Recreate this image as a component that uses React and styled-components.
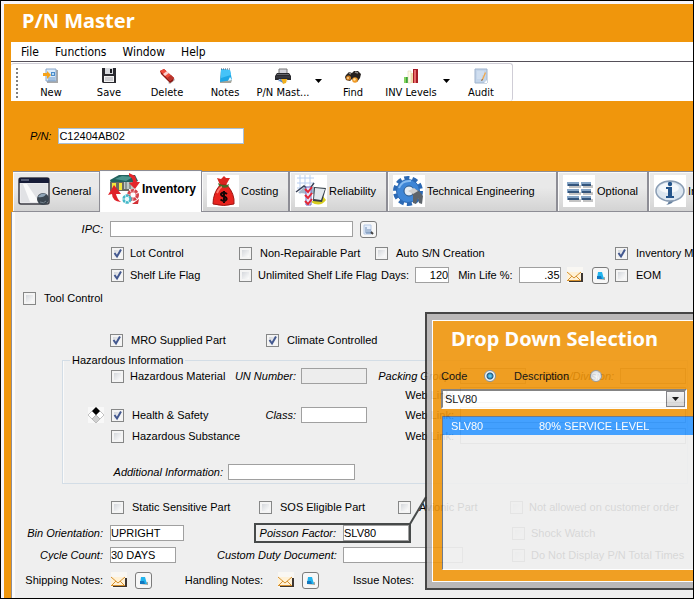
import React, { useState } from "react";
import styled, { createGlobalStyle, css } from "styled-components";

const ui = `"Liberation Sans", Arial, sans-serif`;
const chrome = `"DejaVu Sans Condensed", "Noto Sans", sans-serif`;
const heading = `"Noto Sans", "Open Sans", sans-serif`;
const ORANGE = "#f0960c";

const Global = createGlobalStyle`
  *, *::before, *::after { box-sizing: border-box; }
  body { margin: 0; background: #000; }
  button, input, select { font: inherit; color: inherit; margin: 0; }
`;

const Frame = styled.main`
  position: relative;
  display: flex;
  flex-direction: column;
  min-height: 100vh;
  overflow: hidden;
  border: 1px solid #000;
  background: ${ORANGE};
  box-shadow: inset 3px 3px 0 #f6f4fa;
  padding: 3px 0 0 3px;
  font: 11px/14px ${ui};
  color: #000;
  white-space: nowrap;
`;

const Title = styled.h1`
  margin: 0;
  padding: 2px 18px 0;
  height: 38px;
  font: 700 20px/30px ${heading};
  color: #fff;
`;

const MenuBar = styled.nav`
  display: flex;
  gap: 16px;
  margin-left: 7px;
  padding: 0 10px;
  height: 20px;
  background: #fff;
  border-bottom: 1px solid #555059;
  font: 12px/18px ${chrome};
`;

const MenuItem = styled.button`
  border: 0;
  padding: 0;
  background: none;
`;

const ToolBand = styled.div`
  display: flex;
  margin-left: 7px;
  padding-top: 1px;
  background: #fff;
`;

const ToolBar = styled.div`
  display: flex;
  height: 38px;
  padding: 0 2px 0 11px;
  border: 1px solid #cfcdd6;
  border-left: 0;
  border-bottom: 0;
  border-radius: 3px;
  font: 11px/14px ${chrome};
`;

const Grip = styled.span`
  width: 2px;
  margin: 4px 0 1px -6px;
  background: repeating-linear-gradient(#808080 0 2px, transparent 2px 4px);
`;

const Tool = styled.button`
  display: flex;
  flex-direction: column;
  align-items: center;
  gap: 2px;
  width: 58px;
  padding: 4px 0 0;
  border: 0;
  background: none;
`;

const Tools = styled.div`
  display: flex;
  margin-left: 4px;
`;

const ToolMenu = styled.button`
  display: flex;
  justify-content: center;
  width: 12px;
  padding: 15px 0 0;
  border: 0;
  background: none;
`;

const PartRow = styled.div`
  display: flex;
  align-items: center;
  gap: 7px;
  padding-left: 26px;
  height: 69px;
`;

const Name = styled.label`
  font-style: ${(p) => (p.$upright ? "normal" : "italic")};
  text-align: ${(p) => (p.$start ? "left" : "right")};
`;

const Field = styled.input`
  width: ${(p) => p.$w}px;
  height: 16px;
  padding: 0;
  border: 1px solid ${(p) => (p.$soft ? "#a9bfd6" : "#a0a0a0")};
  border-radius: 0;
  background: #fff;
  text-align: ${(p) => (p.$right ? "right" : "left")};
  outline: 0;
  &:disabled { background: #ededed; }
`;

const Wide = styled(Field)`
  width: auto;
  flex: 1;
  min-width: 0;
`;

const Tabs = styled.div`
  display: flex;
  align-items: flex-end;
  margin-left: 9px;
  height: 42px;
`;

const Tab = styled.button`
  flex: none;
  display: flex;
  align-items: center;
  gap: 2px;
  width: ${(p) => p.$w}px;
  height: 41px;
  padding: 0 0 2px 5px;
  border: 1px solid #8d8d95;
  border-width: 1px 2px 1px 0;
  background: linear-gradient(#e9e9e9 0 40%, #d3d3d3);
  box-shadow: inset 1px 1px 0 #fafafa;
  ${(p) =>
    p.$active &&
    css`
      position: relative;
      height: 42px;
      margin-left: -1px;
      padding: 0 0 5px 8px;
      border-width: 1px 1px 0 0;
      background: #fff;
      font-weight: 700;
      font-size: 12px;
    `}
`;

const Panel = styled.section`
  flex: 1;
  margin-left: 7px;
  padding: 4px 0 4px 2px;
  border-left: 1px solid #8d8d95;
  background: #efefef;
  box-shadow: inset 3px 0 0 #fbfbfb;
`;

const Row = styled.div`
  display: grid;
  grid-template-columns: ${(p) => p.$cols};
  align-items: center;
  height: ${(p) => p.$h || 22}px;
  margin-top: ${(p) => p.$top || 0}px;
`;

const Cell = styled.div`
  display: flex;
  align-items: center;
  justify-content: ${(p) => (p.$end ? "flex-end" : "flex-start")};
  gap: ${(p) => p.$gap || 0}px;
  padding-left: ${(p) => p.$pad || 0}px;
  padding-right: ${(p) => p.$padEnd || 0}px;
  min-width: 0;
`;

const CheckLabel = styled.label`
  display: flex;
  align-items: center;
  gap: ${(p) => p.$gap || 8}px;
`;

const CheckBox = styled.span`
  display: grid;
  flex: none;
  > * { grid-area: 1 / 1; }
  > svg { pointer-events: none; visibility: hidden; }
  > input:checked + svg { visibility: visible; }
`;

const CheckInput = styled.input`
  appearance: none;
  width: 13px;
  height: 13px;
  border: 1px solid #868787;
  background: linear-gradient(135deg, #c9cdd3, #fbfbfb 80%);
  box-shadow: inset 0 0 0 2px #f4f4f4;
`;

const Group = styled.fieldset`
  min-width: 0;
  margin: 2px 5px 0 48px;
  padding: 0;
  border: 1px solid #d3dde6;
  box-shadow: inset 1px 0 0 #fafafa;
`;

const Legend = styled.legend`
  margin-left: 7px;
  padding: 0 2px;
`;

const SmallButton = styled.button`
  display: grid;
  place-items: center;
  flex: none;
  width: 17px;
  height: 17px;
  padding: 0;
  border: ${(p) => (p.$flat ? "0" : "1px solid #7b7b7b")};
  border-radius: 3px;
  background: ${(p) => (p.$flat ? "none" : "#f7f7f7")};
`;

const Callout = styled.div`
  position: relative;
  display: flex;
  align-items: center;
  justify-content: flex-end;
  gap: 7px;
  width: 157px;
  height: 20px;
  border: 2px solid #474a4a;
`;

const Pointer = styled.svg`
  position: absolute;
  left: 100%;
  bottom: 100%;
`;

const Dialog = styled.section`
  position: absolute;
  left: 426px;
  right: 0;
  top: 313px;
  padding-bottom: 12px;
  border: solid #b4b1b1;
  border-width: 6px 0 6px 5px;
  outline: 2px solid #333;
  background: ${ORANGE};
  box-shadow: inset 1px 1px 0 #fff, inset 0 -1px 0 #fff;
  opacity: 0.9;
  margin-right: -3px;
`;

const DialogTitle = styled.h2`
  margin: 0;
  padding: 5px 19px 0;
  font: 700 20px/28px ${heading};
  color: #fff;
`;

const Choices = styled.div`
  display: flex;
  align-items: center;
  height: 22px;
  margin: 12px 0 0 9px;
`;

const Choice = styled.label`
  display: flex;
  align-items: center;
  justify-content: space-between;
  width: ${(p) => p.$w}px;
  margin-right: 18px;
`;

const Radio = styled.input`
  appearance: none;
  width: 12px;
  height: 12px;
  border: 1px solid #8e9499;
  border-radius: 50%;
  background: radial-gradient(circle at 65% 65%, #fff, #cdd1d6);
  &:checked {
    border-color: #7b8a94;
    background: radial-gradient(circle, #45c4f4 0 1px, #0c4974 3px, #f4f7f9 4px);
  }
`;

const Combo = styled.div`
  display: grid;
  margin: 2px 9px 0 9px;
  > * { grid-area: 1 / 1; }
`;

const Select = styled.select`
  appearance: none;
  height: 20px;
  padding: 0 2px;
  border: 2px solid #fff;
  border-top-color: #777;
  border-left-color: #777;
  border-radius: 0;
  background: #fff;
`;

const Arrow = styled.span`
  display: grid;
  place-items: center;
  justify-self: end;
  align-self: center;
  width: 19px;
  height: 16px;
  margin-right: 2px;
  border: 1px solid #77777c;
  background: linear-gradient(#f4f4f4, #d4d4d4);
  pointer-events: none;
`;

const Results = styled.div`
  margin: 7px 0 0 10px;
  height: 154px;
  border: 1px solid #5f6c80;
  border-width: 1px 0 0 1px;
  border-bottom: 1px solid #fff;
  background: #efefef;
`;

const Table = styled.table`
  width: 100%;
  border-collapse: collapse;
  td { height: 18px; padding: 0 8px; }
  td:first-child { width: 88px; }
  tr { background: #2f97ff; color: #fff; }
`;

const Svg = ({ s = 16, children }) => (
  <svg width={s} height={s} viewBox={`0 0 ${s} ${s}`} aria-hidden="true">{children}</svg>
);

const Down = () => (
  <svg width="7" height="4" viewBox="0 0 7 4" aria-hidden="true"><path d="M0 0h7L3.500 4z" fill="#000" /></svg>
);

const NewIcon = () => (
  <Svg>
    <path d="M4 2h11v13H4z" fill="#a9a9a9" /><path d="M3 1h10v12H3z" fill="#dcebfa" stroke="#8aa7c9" />
    <path d="M8 4h4v4H8z" fill="#4b8ccc" /><path d="M9 5h2v2H9z" fill="#b7dcf6" />
    <path d="M5 10h7M5 12h7" stroke="#6a96c6" /><path d="M0 5h4V3l4 4-4 4V8H0z" fill="#f5a31b" />
  </Svg>
);
const SaveIcon = () => (
  <Svg>
    <path d="M1 0h14v15H2l-1-1z" fill="#2b2b31" /><path d="M4 0h8v6H4z" fill="#d8dade" />
    <path d="M9 1h2v4H9z" fill="#1c1c20" /><path d="M3 8h10v6H3z" fill="#f2f2f2" /><path d="M4 10h8M4 12h8" stroke="#a8a8b0" />
  </Svg>
);
const DeleteIcon = () => (
  <Svg>
    <path d="M9 15l6-5 1 2-5 4z" fill="#b5b5b5" /><path d="M1 3l4-2 10 9-1 3-3 2-9-9z" fill="#8d1712" />
    <path d="M1 3l4-2 10 9-4 3z" fill="#ee4b3c" /><path d="M4 6l4-3 2 2-4 3z" fill="#fff" opacity=".75" />
    <path d="M8 10l4-3 3 3-4 3z" fill="#b8352d" />
  </Svg>
);
const NotesIcon = () => (
  <Svg>
    <path d="M4 3l11 9-1 3H3z" fill="#a6a49a" /><path d="M4 1l9 1 2 10-12 2z" fill="#1ea7e6" />
    <path d="M4 1l9 1 1 5-10 3z" fill="#45c3f8" /><path d="M11 13l4-1-2-3z" fill="#e3f6fc" /><path d="M4 1h9" stroke="#46576b" strokeDasharray="1 1" />
  </Svg>
);
const PrintIcon = () => (
  <Svg>
    <path d="M4 1h8v5H4z" fill="#d4d4da" stroke="#777" /><path d="M2 5h12l2 3v4H0V8z" fill="#29292d" />
    <path d="M2 6h12v1H2z" fill="#66666c" /><path d="M1 9h14" stroke="#46464e" /><path d="M4 11h8l1 3H3z" fill="#e8edf5" />
    <path d="M6 11h6l-1 4-3 1z" fill="#f2b11e" /><path d="M3 12l3-1 2 4z" fill="#5282c8" />
  </Svg>
);
const FindIcon = () => (
  <Svg>
    <path d="M1 7l3-3 3 1 2-2 4 0 3 3-1 4-3 4H9l-2-3-2 2-4-1-1-3z" fill="#25211f" />
    <path d="M4 5l2 1M10 4l3 1" stroke="#8b8784" strokeWidth="1.500" /><circle cx="3.500" cy="10" r="2.500" fill="#c97a22" />
    <circle cx="10" cy="12" r="2.800" fill="#f09a26" /><circle cx="3" cy="10" r="1" fill="#ffd890" /><circle cx="9.500" cy="11.500" r="1.200" fill="#ffe0a0" />
  </Svg>
);
const LevelsIcon = () => (
  <Svg>
    <path d="M1 9h4v6H1z" fill="#3ba53b" /><path d="M1 9h2v6H1z" fill="#85d35d" /><path d="M5 5h5v10H5z" fill="#f2dfae" />
    <path d="M5 3h3v12H5z" fill="#fffbe9" stroke="#d8cfa4" strokeWidth=".5" /><path d="M10 1h5v14h-5z" fill="#a51b25" /><path d="M11 2h2v13h-2z" fill="#e66a6a" />
  </Svg>
);
const AuditIcon = () => (
  <Svg>
    <path d="M2 1h12v14H2z" fill="#c4d5ea" stroke="#9fb3cc" /><path d="M4 4h7M4 6h7M4 8h5M4 10h5" stroke="#dbe7f5" />
    <path d="M11 15l3-3v3z" fill="#fff" /><path d="M12 4l-3 7-1 2 2-1 3-7z" fill="#f2a94c" /><path d="M8 13l1-2 1 1z" fill="#555" />
  </Svg>
);

const GeneralIcon = () => (
  <Svg s={32}>
    <rect x="1" y="3" width="30" height="26" rx="2" fill="#e9e9ec" stroke="#3c3c44" strokeWidth="1.500" />
    <path d="M1 3h30v5H1z" fill="#171c38" /><path d="M3 5h8" stroke="#8f96aa" /><path d="M3 9h26v18H3z" fill="#e1e2e5" />
    <path d="M9 9l12 18h-9L5 9z" fill="#fafafa" /><circle cx="25" cy="24" r="6" fill="#3c4650" />
    <path d="M20 22q3-5 8-3-2 4-8 3z" fill="#8fa3b5" /><path d="M22 27q4 2 6-1" stroke="#74818d" fill="none" />
  </Svg>
);
const InventoryIcon = () => (
  <Svg s={32}>
    <path d="M2 7l9-5 16 0 3 6-8 3H3z" fill="#22625f" /><path d="M7 6l7-3 11 1-7 4z" fill="#4c958e" />
    <path d="M2 9h19v9H2z" fill="#6b6b62" /><path d="M4 10h4v7H4zM11 10h3v7h-3z" fill="#f1e63c" /><path d="M16 9h10v7H16z" fill="#bfc8c5" />
    <path d="M18 9v7M22 9v7" stroke="#5b6462" />
    <path d="M21 0l6 3 2 6 3 0-5 7-6-6 4-1q0-4-4-6z" fill="#e4262b" /><path d="M6 12l7 9-5 0q1 5 5 8-9-1-9-8l-4 1z" fill="#df2028" />
    <circle cx="25" cy="22" r="4.500" fill="#fff" stroke="#d3434a" strokeWidth="3" strokeDasharray="3 .7" />
    <circle cx="25" cy="22" r="3" fill="none" stroke="#e98a8e" />
    <circle cx="19" cy="26" r="3.500" fill="#e8fafc" stroke="#45b8c8" strokeWidth="2.500" strokeDasharray="3 .7" /><path d="M24 31l7-5-1 5z" fill="#d23036" />
  </Svg>
);
const CostingIcon = () => (
  <Svg s={32}>
    <path d="M0 0h32v32H0z" fill="#fff" /><path d="M10 3l4 1 3-3 2 2 4 0-4 7h-6z" fill="#da251f" />
    <path d="M13 10h7q8 9 7 19-10 3-21 0 0-11 7-19z" fill="#e8231e" stroke="#9f1512" /><path d="M11 8q6 4 11 1l-1 3q-5 2-9-1z" fill="#456b26" />
    <path d="M10 18q3-6 5-6" stroke="#ff786c" fill="none" strokeWidth="2" />
    <path d="M20 19q-4-3-6 0 0 2 3 2.500 3 1 2.500 3-2 3-6 0M17 16v12" stroke="#160505" strokeWidth="2" fill="none" />
  </Svg>
);
const ReliabilityIcon = () => (
  <Svg s={32}>
    <path d="M0 0h32v32H0z" fill="#fff" /><path d="M2 3h17M2 8h17M2 13h17M5 0v19M10 0v19M15 0v19" stroke="#b9cff0" />
    <path d="M3 18l6-6 5 4 5-5v8z" fill="#a6b8cb" /><path d="M1 17l8-6 5 4 5-7" stroke="#3a4358" strokeWidth="1.500" fill="none" />
    <path d="M16 27q9 6 15-2l-4-5z" fill="#d8ce20" /><path d="M19 12l12 1-4 14-9-1z" fill="#353f48" /><path d="M20 13l10 1-4 11-7-1z" fill="#e3e8ec" />
    <path d="M11 12h5v18h-5z" fill="#e9e6fa" stroke="#6e67c0" /><path d="M10 14l3 3 4-5M10 20l3 3 4-5M10 26l3 3 4-5" stroke="#e22736" strokeWidth="2" fill="none" />
  </Svg>
);
const GearIcon = () => (
  <Svg s={32}>
    <path d="M0 0h32v32H0z" fill="#fff" />
    <circle cx="15" cy="16" r="13" fill="none" stroke="#2c69b4" strokeWidth="4" strokeDasharray="5.100 3.068" />
    <circle cx="15" cy="16" r="11.500" fill="#3f86d6" stroke="#2c69b4" /><path d="M6 13q3-8 12-7" stroke="#86bbf0" strokeWidth="2" fill="none" />
    <circle cx="16" cy="16" r="5" fill="#e6edf4" stroke="#28588c" /><path d="M18 16l4-2 4 2 4 5-1 8-3-1-1-5-2 6-3-1 0-7z" fill="#5e646a" />
    <path d="M15 16l6-3 4 3-5 3z" fill="#cfcfcf" />
  </Svg>
);
const OptionalIcon = () => (
  <Svg s={32}>
    <path d="M0 0h32v32H0z" fill="#fff" />
    {[7, 14, 21].map((y) => (
      <g key={y}>
        <path d={`M6 ${y + 3}h12v3H6zM20 ${y + 3}h10v3H20z`} fill="#c4c4c4" />
        <path d={`M4 ${y}h12v4H4zM18 ${y}h10v4H18z`} fill="#86a5c6" />
        <path d={`M5 ${y + 2}h11v2H5zM19 ${y + 2}h9v2h-9z`} fill="#34557c" />
      </g>
    ))}
  </Svg>
);
const InfoIcon = () => (
  <Svg s={32}>
    <path d="M0 0h32v32H0z" fill="#fff" /><path d="M10 25l5 1q-1 3-3 4 7-1 8-5z" fill="#66809e" />
    <ellipse cx="16" cy="16" rx="14" ry="10" fill="#dce6f0" stroke="#8a9db4" strokeWidth="1.500" /><ellipse cx="15" cy="13" rx="10" ry="5" fill="#fff" opacity=".7" />
    <circle cx="16" cy="9" r="2.200" fill="#24548b" /><path d="M12 12h6v9h2v2h-8v-2h2v-7h-2z" fill="#24548b" />
  </Svg>
);

const EnvelopeIcon = () => (
  <Svg>
    <path d="M0 0h16v16H0z" fill="#f9f7f3" /><path d="M3 6h13v9H2v-1z" fill="#3c3531" /><path d="M0 5h14v9H0z" fill="#fff1d6" />
    <path d="M0 5l7 6 7-6M0 14l5-5M14 14L9 9M0 13.500h14" stroke="#d6912f" fill="none" />
  </Svg>
);
const MiniNote = () => (
  <Svg s={9}><path d="M1 8l8 1V6z" fill="#a4a49b" /><path d="M2 1h4l2 7H1z" fill="#22b4ee" /><path d="M1 5h4l1 3H1z" fill="#1378c0" /></Svg>
);
const LookupIcon = () => (
  <Svg s={11}>
    <path d="M1 1h7v9H1z" fill="#e5eefb" stroke="#b5c8e4" /><path d="M3 3v6h6M4 6h4M4 8h5" stroke="#6d8bb3" fill="none" /><path d="M8 8l2 2" stroke="#444" strokeWidth="2" />
  </Svg>
);
const HazardIcon = () => (
  <Svg>
    <path d="M0 0h16v16H0z" fill="#f8f8f8" /><path d="M4 4l4 4-4 4-4-4zM12 4l4 4-4 4-4-4z" fill="#fff" stroke="#aaa" strokeWidth=".7" />
    <path d="M8 0l4 4-4 4-4-4z" fill="#000" /><path d="M8 8l4 4-4 4-4-4z" fill="#d0d0d0" stroke="#aaa" strokeWidth=".7" />
  </Svg>
);

function Check({ label, on = false, gap }) {
  const [checked, setChecked] = useState(on);
  return (
    <CheckLabel $gap={gap}>
      <CheckBox>
        <CheckInput type="checkbox" checked={checked} onChange={(e) => setChecked(e.target.checked)} />
        <Svg s={13}><path d="M3.500 6l2.500 3.500 4-7" stroke="#43588f" strokeWidth="2" fill="none" /></Svg>
      </CheckBox>
      {label}
    </CheckLabel>
  );
}

const NoteButtons = ({ what }) => (
  <Cell $gap={8}>
    <SmallButton $flat type="button" aria-label={`Mail ${what}`}><EnvelopeIcon /></SmallButton>
    <SmallButton type="button" aria-label={`Open ${what}`}><MiniNote /></SmallButton>
  </Cell>
);

const WebLink = ({ id }) => (
  <>
    <Cell $end><Name $upright htmlFor={id}>Web Link:</Name></Cell>
    <Cell $pad={6} $padEnd={1}><Wide id={id} /></Cell>
  </>
);

const GROUP_COLS = "25px 23px 124px 66px 66px 87px 1fr";

const tools = [
  ["New", NewIcon], ["Save", SaveIcon], ["Delete", DeleteIcon], ["Notes", NotesIcon], ["P/N Mast...", PrintIcon, true],
  ["Find", FindIcon], ["INV Levels", LevelsIcon, true], ["Audit", AuditIcon],
];
const tabs = [
  ["General", GeneralIcon, 88], ["Inventory", InventoryIcon, 102], ["Costing", CostingIcon, 88], ["Reliability", ReliabilityIcon, 98],
  ["Technical Engineering", GearIcon, 170], ["Optional", OptionalIcon, 91], ["Information", InfoIcon, 120],
];

export default function App() {
  const [mode, setMode] = useState("code");
  return (
    <>
      <Global />
      <Frame>
        <Title>P/N Master</Title>
        <MenuBar>
          {["File", "Functions", "Window", "Help"].map((m) => <MenuItem type="button" key={m}>{m}</MenuItem>)}
        </MenuBar>
        <ToolBand>
          <ToolBar>
            <Grip />
            <Tools>
              {tools.map(([name, Icon, menu]) => (
                <React.Fragment key={name}>
                  <Tool type="button"><Icon />{name}</Tool>
                  {menu && <ToolMenu type="button" aria-label={`${name} menu`}><Down /></ToolMenu>}
                </React.Fragment>
              ))}
            </Tools>
          </ToolBar>
        </ToolBand>
        <PartRow>
          <Name htmlFor="pn">P/N:</Name>
          <Field id="pn" $w={186} $soft defaultValue="C12404AB02" />
        </PartRow>
        <Tabs role="tablist">
          {tabs.map(([name, Icon, w]) => (
            <Tab key={name} type="button" role="tab" aria-selected={name === "Inventory"} $active={name === "Inventory"} $w={w}>
              <Icon />{name}
            </Tab>
          ))}
        </Tabs>
        <Panel>
          <Row $h={26} $cols="89px 1fr">
            <Name htmlFor="ipc">IPC:</Name>
            <Cell $pad={7} $gap={7}>
              <Field id="ipc" $w={243} />
              <SmallButton type="button" aria-label="Look up IPC"><LookupIcon /></SmallButton>
            </Cell>
          </Row>
          <Row $cols="97px 128px 136px 240px 1fr">
            <span />
            <Check label="Lot Control" on gap={6} />
            <Check label="Non-Repairable Part" />
            <Check label="Auto S/N Creation" />
            <Check label="Inventory Movement" on />
          </Row>
          <Row $cols="97px 128px 142px 234px 1fr">
            <span />
            <Check label="Shelf Life Flag" on gap={6} />
            <Check label="Unlimited Shelf Life Flag" gap={6} />
            <Cell $gap={6}>
              <Name $upright htmlFor="days">Days:</Name>
              <Field id="days" $w={34} $right defaultValue="120" />
              <Cell $pad={3} $gap={6}>
                <Name $upright htmlFor="life">Min Life %:</Name>
                <Field id="life" $w={42} $right defaultValue=".35" />
                <NoteButtons what="shelf life notes" />
              </Cell>
            </Cell>
            <Check label="EOM" />
          </Row>
          <Row $h={24} $cols="9px 1fr"><span /><Check label="Tool Control" /></Row>
          <Row $top={19} $cols="96px 156px 1fr">
            <span />
            <Check label="MRO Supplied Part" on />
            <Check label="Climate Controlled" on />
          </Row>
          <Group>
            <Legend>Hazardous Information</Legend>
            <Row $h={18} $cols={GROUP_COLS}>
              <span /><span />
              <Check label="Hazardous Material" gap={6} />
              <Cell $end $padEnd={5}><Name htmlFor="un">UN Number:</Name></Cell>
              <Field id="un" $w={66} disabled />
              <Cell $end><Name htmlFor="packing">Packing Group:</Name></Cell>
              <Cell $pad={6} $padEnd={1} $gap={6}>
                <Field id="packing" $w={66} disabled />
                <Cell $pad={10} $gap={6}>
                  <Name htmlFor="division">Class/Division:</Name>
                  <Field id="division" $w={66} disabled />
                </Cell>
              </Cell>
            </Row>
            <Row $h={20} $cols={GROUP_COLS}><span /><span /><span /><span /><span /><WebLink id="web1" /></Row>
            <Row $h={20} $cols={GROUP_COLS}>
              <span /><HazardIcon />
              <Check label="Health &amp; Safety" on />
              <Cell $end $padEnd={5}><Name htmlFor="class">Class:</Name></Cell>
              <Field id="class" $w={66} />
              <WebLink id="web2" />
            </Row>
            <Row $cols={GROUP_COLS}>
              <span /><span /><Check label="Hazardous Substance" /><span /><span />
              <WebLink id="web3" />
            </Row>
            <Row $top={14} $cols="160px 1fr">
              <Name htmlFor="extra">Additional Information:</Name>
              <Cell $pad={5}><Field id="extra" $w={127} /></Cell>
            </Row>
          </Group>
          <Row $top={12} $cols="97px 148px 139px 112px 1fr">
            <span />
            <Check label="Static Sensitive Part" />
            <Check label="SOS Eligible Part" />
            <Check label="Avionic Part" />
            <Check label="Not allowed on customer order" gap={6} />
          </Row>
          <Row $top={4} $cols="89px 151px 258px 1fr">
            <Name htmlFor="bin">Bin Orientation:</Name>
            <Cell $pad={7}><Field id="bin" $w={74} defaultValue="UPRIGHT" /></Cell>
            <Callout>
              <Name htmlFor="poisson">Poisson Factor:</Name>
              <Field id="poisson" $w={66} defaultValue="SLV80" />
              <Pointer width="18" height="30" viewBox="0 0 18 30" aria-hidden="true">
                <path d="M1 29L17 2" stroke="#474a4a" strokeWidth="2" />
              </Pointer>
            </Callout>
            <Check label="Shock Watch" gap={6} />
          </Row>
          <Row $cols="89px 233px 176px 1fr">
            <Name htmlFor="cycle">Cycle Count:</Name>
            <Cell $pad={7}>
              <Field id="cycle" $w={66} defaultValue="30 DAYS" />
              <Cell $pad={41}><Name htmlFor="duty">Custom Duty Document:</Name></Cell>
            </Cell>
            <Cell $pad={7}><Field id="duty" $w={120} /></Cell>
            <Check label="Do Not Display P/N Total Times" gap={6} />
          </Row>
          <Row $h={28} $cols="89px 76px 84px 90px 1fr">
            <Name as="span" $upright>Shipping Notes:</Name>
            <Cell $pad={7}><NoteButtons what="shipping notes" /></Cell>
            <Name as="span" $upright>Handling Notes:</Name>
            <Cell $pad={14}><NoteButtons what="handling notes" /></Cell>
            <Name as="span" $upright $start>Issue Notes:</Name>
          </Row>
        </Panel>
        <Dialog aria-labelledby="dialog-title">
          <DialogTitle id="dialog-title">Drop Down Selection</DialogTitle>
          <Choices>
            <Choice $w={55}>Code<Radio type="radio" name="mode" checked={mode === "code"} onChange={() => setMode("code")} /></Choice>
            <Choice $w={88}>Description<Radio type="radio" name="mode" checked={mode === "desc"} onChange={() => setMode("desc")} /></Choice>
          </Choices>
          <Combo>
            <Select aria-label="Code" defaultValue="SLV80"><option>SLV80</option></Select>
            <Arrow><Down /></Arrow>
          </Combo>
          <Results>
            <Table><tbody><tr><td>SLV80</td><td>80% SERVICE LEVEL</td></tr></tbody></Table>
          </Results>
        </Dialog>
      </Frame>
    </>
  );
}
